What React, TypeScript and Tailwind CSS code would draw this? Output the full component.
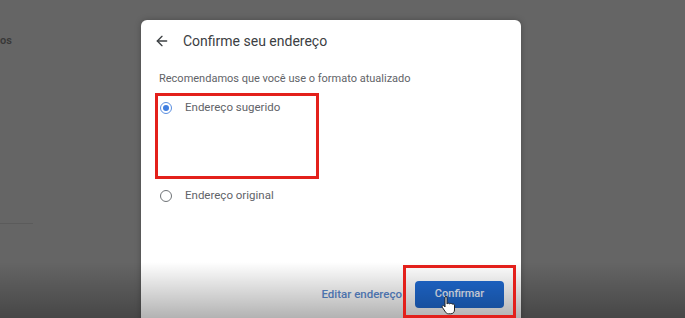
import { ArrowLeft } from 'lucide-react'

function Radio({ checked }: { checked: boolean }) {
  if (checked) {
    return (
      <span className="flex h-[12px] w-[12px] items-center justify-center rounded-full border-[1.5px] border-[#5b8fe0]">
        <span className="h-[6px] w-[6px] rounded-full bg-[#3f7ee0]" />
      </span>
    )
  }
  return <span className="h-[12px] w-[12px] rounded-full border-[1.5px] border-[#6f7377]" />
}

function HandCursor() {
  return (
    <svg width="16" height="20" viewBox="0 0 16 20" className="absolute left-[441px] top-[295px]">
      <path
        d="M4.5 1.5c.9 0 1.5.6 1.5 1.5v6l.2-.1c.5-.9 2-.9 2.5 0 .6-.7 2-.6 2.4.3.7-.5 2.1-.2 2.4.9V15c0 2.2-1.6 3.8-3.8 3.8H7.5c-1.2 0-2.2-.6-2.9-1.6L1.3 12.3c-.5-.8.1-1.8 1-1.7.4 0 .8.3 1.1.6l.6.8V3c0-.9.6-1.5 1.5-1.5z"
        fill="#fff"
        stroke="#222"
        strokeWidth="1"
        strokeLinejoin="round"
      />
    </svg>
  )
}

export default function App() {
  return (
    <div className="relative h-[318px] w-[685px] overflow-hidden bg-[#656565] font-['Roboto',sans-serif]">
      <div className="absolute left-0 top-[33px] text-[11px] font-semibold text-[#383838]">os</div>
      <div className="absolute left-0 top-[223px] h-px w-[33px] bg-[#5b5b5b]" />

      <div className="flex pl-[141px] pt-[20px]">
        <div className="flex h-[310px] w-[380px] flex-col rounded-t-[6px] bg-white shadow-[0_0_6px_rgba(0,0,0,0.25)]">
          <div className="mt-[9px] flex h-[24px] items-center gap-[13px] pl-[13px]">
            <ArrowLeft size={16} strokeWidth={2} color="#3c4043" />
            <span className="text-[14px] text-[#3c4043]">Confirme seu endereço</span>
          </div>

          <p className="mt-[18px] pl-[18px] text-[11px] leading-[16px] text-[#5f6368]">
            Recomendamos que você use o formato atualizado
          </p>

          <div className="mt-[13px] flex h-[16px] items-center gap-[13px] pl-[19px]">
            <Radio checked />
            <span className="text-[11.5px] text-[#5f6368]">Endereço sugerido</span>
          </div>

          <div className="mt-[72px] flex h-[16px] items-center gap-[13px] pl-[19px]">
            <Radio checked={false} />
            <span className="text-[11.5px] text-[#5f6368]">Endereço original</span>
          </div>

          <div className="mt-[77px] flex items-center justify-end gap-[13px] pr-[17px]">
            <span className="text-[11.5px] font-medium text-[#5b8ad0]">Editar endereço</span>
            <button
              type="button"
              className="h-[27px] w-[89px] rounded-[4px] bg-[#1f6ad2] text-[11px] font-medium text-[#e8eefa]"
            >
              Confirmar
            </button>
          </div>
        </div>
      </div>

      {/* video vignette */}
      <div className="pointer-events-none absolute inset-x-0 bottom-0 top-[262px] bg-gradient-to-b from-transparent to-black/30" />

      {/* annotations */}
      <div className="pointer-events-none absolute left-[155px] top-[93px] h-[86px] w-[164px] border-[3px] border-[#e3201b]" />
      <div className="pointer-events-none absolute left-[403px] top-[265px] h-[53px] w-[113px] border-[3px] border-[#e3201b]" />

      <HandCursor />
    </div>
  )
}
